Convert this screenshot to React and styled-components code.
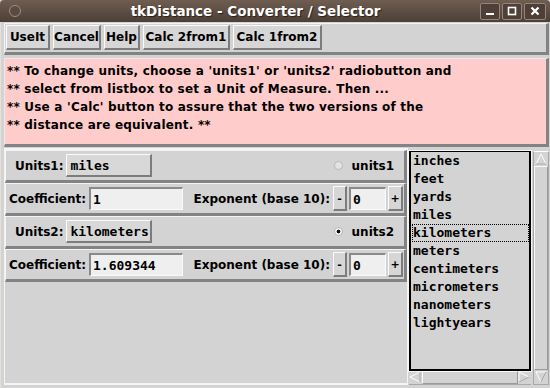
import React from 'react';
import styled, { createGlobalStyle } from 'styled-components';

const Global = createGlobalStyle`
  html, body { margin: 0; padding: 0; overflow: hidden; background: #d3d3d3; }
`;

const LABEL_FONT = `"DejaVu Sans", "Liberation Sans", sans-serif`;
const MONO_FONT = `"DejaVu Sans Mono", "Liberation Mono", monospace`;

const Window = styled.div`
  width: 550px;
  height: 388px;
  display: flex;
  flex-direction: column;
  background: #d3d3d3;
  overflow: hidden;
  font-family: ${LABEL_FONT};
`;

const TitleBar = styled.div`
  height: 22px;
  flex: none;
  display: flex;
  align-items: center;
  background: linear-gradient(#6f5d51, #4d3f37);
  border-radius: 4px 4px 0 0;
  color: #fff;
`;

const MenuDot = styled.div`
  width: 10px;
  height: 10px;
  margin: 0 8px 0 9px;
  border-radius: 50%;
  border: 1px solid #9d8f86;
  background: #5a4a40;
`;

const Title = styled.div`
  flex: 1;
  text-align: center;
  font-weight: bold;
  font-size: 13.5px;
  text-shadow: 1px 1px 1px #2a201a;
  padding-left: 2px;
`;

const Controls = styled.div`
  display: flex;
  gap: 2px;
  padding-right: 4px;
`;

const CtlBtn = styled.div`
  width: ${(p) => p.$w || 20}px;
  height: 17px;
  box-sizing: border-box;
  border: 1px solid #958479;
  border-radius: 2px;
  background: #4e4038;
  display: flex;
  align-items: center;
  justify-content: center;
`;

const Content = styled.div`
  flex: 1;
  display: flex;
  flex-direction: column;
  padding: 1px 1px 3px 3px;
  border-left: 1px solid #e6e0d8;
  min-height: 0;
`;

const Toolbar = styled.div`
  height: 32px;
  box-sizing: border-box;
  display: flex;
  align-items: center;
  gap: 3px;
  padding: 0 1px 1px 1px;
  border-style: solid;
  border-width: 1px 3px 3px 1px;
  border-color: #f4f4f4 #838383 #838383 #f4f4f4;
`;

const Button = styled.div`
  width: ${(p) => (p.$w ? `${p.$w}px` : 'auto')};
  height: 25px;
  box-sizing: border-box;
  flex: none;
  display: flex;
  align-items: center;
  justify-content: center;
  padding: 0;
  border-style: solid;
  border-width: 1px 2px 2px 1px;
  border-color: #fbfbfb #7c7c7c #7c7c7c #fbfbfb;
  background: #d6d6d6;
  font-weight: bold;
  font-size: ${(p) => (p.$small ? 11 : 12)}px;
  color: #000;
  white-space: nowrap;
`;

const Notice = styled.div`
  margin-top: 3px;
  height: 89px;
  box-sizing: border-box;
  background: #ffcccc;
  border-style: solid;
  border-width: 1px 3px 3px 1px;
  border-color: #f3e6e6 #838383 #838383 #f3e6e6;
  padding: 3px 0 0 2px;
  font-size: 12px;
  letter-spacing: 0.2px;
  font-weight: bold;
  line-height: 18px;
  white-space: pre;
`;

const Main = styled.div`
  flex: 1;
  display: flex;
  margin-top: 1px;
  min-height: 0;
`;

const LeftPanel = styled.div`
  width: 404px;
  flex: none;
  display: flex;
  flex-direction: column;
  box-sizing: border-box;
  border: 1px solid #f4f4f4;
  border-top-width: 2px;
  border-bottom-width: 2px;
`;

const Row = styled.div`
  height: 33px;
  box-sizing: border-box;
  display: flex;
  align-items: center;
  padding: 0 ${(p) => (p.$unit ? 7 : 1)}px 0 ${(p) => (p.$unit ? 9 : 3)}px;
  border-style: solid;
  border-width: 1px 3px 3px 1px;
  border-color: #f4f4f4 #838383 #838383 #f4f4f4;
`;

const Label = styled.span`
  font-size: 12px;
  font-weight: bold;
  margin-right: 3px;
  white-space: nowrap;
`;

const UnitButton = styled.div`
  width: 86px;
  height: 23px;
  box-sizing: border-box;
  display: flex;
  align-items: center;
  padding-left: 3px;
  border-style: solid;
  border-width: 1px 2px 2px 1px;
  border-color: #fbfbfb #7c7c7c #7c7c7c #fbfbfb;
  background: #d8d8d8;
  font-family: ${MONO_FONT};
  font-weight: bold;
  font-size: 13px;
`;

const Entry = styled.div`
  width: ${(p) => p.$w}px;
  height: 23px;
  box-sizing: border-box;
  display: flex;
  align-items: center;
  padding-left: 2px;
  margin: 0 ${(p) => p.$mx || 0}px;
  border-style: solid;
  border-width: 2px 1px 1px 2px;
  border-color: #8a8a8a #fafafa #fafafa #8a8a8a;
  background: #efefef;
  font-family: ${MONO_FONT};
  font-weight: bold;
  font-size: 13px;
`;

const Spacer = styled.div`
  flex: 1;
`;

const Radio = styled.div`
  width: 9px;
  height: 9px;
  box-sizing: border-box;
  border-radius: 50%;
  border: 1px solid #b8b8b8;
  background: ${(p) => (p.$on ? 'radial-gradient(circle, #111 0 1.6px, #f2f2f2 2.2px)' : '#e4e4e4')};
  margin-right: 9px;
`;

const ListArea = styled.div`
  flex: 1;
  display: grid;
  grid-template-columns: 1fr 16px;
  grid-template-rows: 1fr 14px;
  margin: 3px 0 0 1px;
  min-width: 0;
`;

const ListBox = styled.div`
  grid-column: 1;
  grid-row: 1;
  box-sizing: border-box;
  border: 2px solid #000;
  border-top-width: 1px;
  outline: 1px solid #f4f4f4;
  background: #d3d3d3;
  padding: 0 0 0 1px;
  margin-right: 2px;
  overflow: hidden;
`;

const Item = styled.div`
  height: 18px;
  line-height: 18px;
  box-sizing: border-box;
  padding-left: 1px;
  font-family: ${MONO_FONT};
  font-weight: bold;
  font-size: 13px;
  white-space: nowrap;
  ${(p) => p.$active && 'outline: 1px dotted #000; outline-offset: -1px;'}
`;

const VScroll = styled.div`
  grid-column: 2;
  grid-row: 1 / span 2;
  box-sizing: border-box;
  display: flex;
  flex-direction: column;
  border: 1px solid #a8a8a8;
  border-top-color: #fff;
`;

const HScroll = styled.div`
  grid-column: 1;
  grid-row: 2;
  box-sizing: border-box;
  display: flex;
  align-items: stretch;
  margin-right: 2px;
  border-bottom: 1px solid #a8a8a8;
`;

const Thumb = styled.div`
  flex: 1;
  box-sizing: border-box;
  border-style: solid;
  border-width: 1px;
  border-color: #fafafa #9a9a9a #9a9a9a #fafafa;
`;

const Arrow = styled.svg`
  flex: none;
  display: block;
`;

const units = ['inches', 'feet', 'yards', 'miles', 'kilometers', 'meters', 'centimeters', 'micrometers', 'nanometers', 'lightyears'];

const notice = `** To change units, choose a 'units1' or 'units2' radiobutton and
** select from listbox to set a Unit of Measure. Then ...
** Use a 'Calc' button to assure that the two versions of the
** distance are equivalent. **`;

const UnitRow = ({ n, unit, on }) => (
  <Row $unit>
    <Label>Units{n}:</Label>
    <UnitButton>{unit}</UnitButton>
    <Spacer />
    <Radio $on={on} />
    <Label>units{n}</Label>
  </Row>
);

const CoefRow = ({ coef }) => (
  <Row>
    <Label>Coefficient:</Label>
    <Entry $w={94}>{coef}</Entry>
    <Spacer />
    <Label>Exponent (base 10):</Label>
    <Button $small $w={14}>-</Button>
    <Entry $w={37} $mx={2}>0</Entry>
    <Button $small $w={15}>+</Button>
  </Row>
);

const App = () => (
  <Window>
    <Global />
    <TitleBar>
      <MenuDot />
      <Title>tkDistance - Converter / Selector</Title>
      <Controls>
        <CtlBtn>
          <svg width="10" height="10"><rect x="1" y="7" width="8" height="2" fill="#fff" /></svg>
        </CtlBtn>
        <CtlBtn>
          <svg width="10" height="10"><rect x="1.5" y="1.5" width="7" height="7" fill="none" stroke="#fff" strokeWidth="1.6" /></svg>
        </CtlBtn>
        <CtlBtn $w={22}>
          <svg width="10" height="10"><path d="M1.5 1.5 L8.5 8.5 M8.5 1.5 L1.5 8.5" stroke="#fff" strokeWidth="2.2" /></svg>
        </CtlBtn>
      </Controls>
    </TitleBar>
    <Content>
      <Toolbar>
        <Button $w={44}>UseIt</Button>
        <Button $w={48}>Cancel</Button>
        <Button $w={36}>Help</Button>
        <Button $w={87}>Calc 2from1</Button>
        <Button $w={89}>Calc 1from2</Button>
      </Toolbar>
      <Notice>{notice}</Notice>
      <Main>
        <LeftPanel>
          <UnitRow n={1} unit="miles" />
          <CoefRow coef="1" />
          <UnitRow n={2} unit="kilometers" on />
          <CoefRow coef="1.609344" />
        </LeftPanel>
        <ListArea>
          <ListBox>
            {units.map((u) => (
              <Item key={u} $active={u === 'kilometers'}>{u}</Item>
            ))}
          </ListBox>
          <VScroll>
            <Arrow width="14" height="14">
              <path d="M7 2 L12 12 L2 12 Z" fill="none" stroke="#fff" />
              <path d="M12 12 L2 12" stroke="#999" />
            </Arrow>
            <Thumb />
            <Arrow width="14" height="14">
              <path d="M2 2 L12 2 L7 12 Z" fill="none" stroke="#fff" />
              <path d="M12 2 L7 12" stroke="#999" />
            </Arrow>
          </VScroll>
          <HScroll>
            <Arrow width="13" height="13">
              <path d="M11 1 L11 11 L1 6 Z" fill="none" stroke="#fff" />
              <path d="M11 1 L11 11" stroke="#999" />
            </Arrow>
            <Thumb />
            <Arrow width="13" height="13">
              <path d="M1 1 L1 11 L11 6 Z" fill="none" stroke="#fff" />
              <path d="M1 11 L11 6" stroke="#999" />
            </Arrow>
          </HScroll>
        </ListArea>
      </Main>
    </Content>
  </Window>
);

export default App;
